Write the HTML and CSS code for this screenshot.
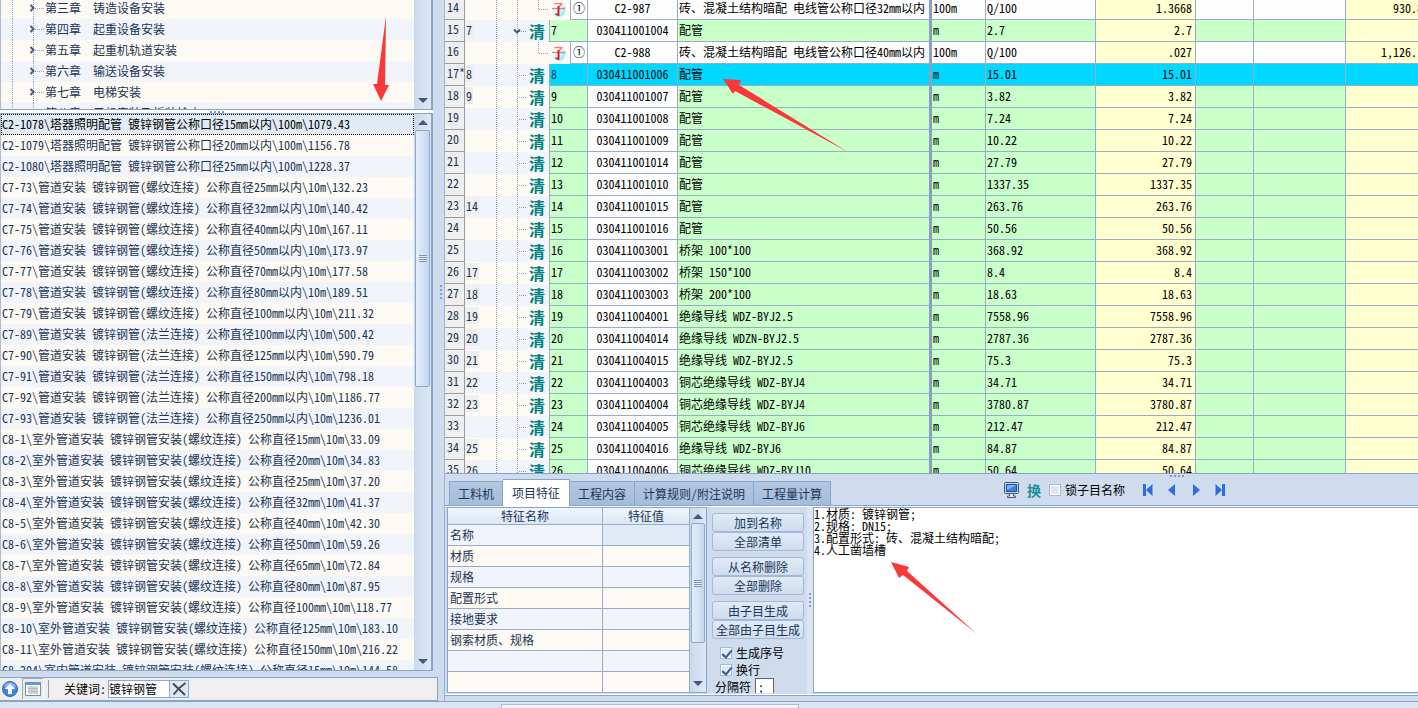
FILE: index.html
```html
<!DOCTYPE html>
<html lang="zh-CN">
<head>
<meta charset="utf-8">
<title>工程量清单</title>
<link rel="stylesheet" href="styles.css">
</head>
<body>
<svg class="defs" aria-hidden="true">
  <symbol id="chap" viewBox="0 0 44 21"><path class="dots" d="M11.5 0V21M32.5 0V21M34 10.5H43"/><path class="chev" d="M29.5 7L32.5 10L29.5 13"/></symbol>
  <symbol id="leaf" viewBox="0 0 33 22"><path class="dots" d="M.5 0V22M21.5 0V22M23 11.5H31"/></symbol>
  <symbol id="open" viewBox="0 0 33 22"><path class="dots" d="M.5 0V22M21.5 0V22M23 11.5H31"/><path class="chev" d="M18 9.5L21 12.5L24 9.5"/></symbol>
  <symbol id="child" viewBox="0 0 54 22"><path class="dots" d="M.5 0V22M21.5 0V22M42.5 0V11.5M43 11.5H53"/></symbol>
  <symbol id="up" viewBox="0 0 10 5"><path d="M5 0L10 5H0Z"/></symbol>
  <symbol id="down" viewBox="0 0 10 5"><path d="M5 5L10 0H0Z"/></symbol>
  <symbol id="zi" viewBox="0 0 15 15"><path d="M1.500 1.500H11.500M11 2L8 4.500M1 6.500H14" fill="none" stroke="#f4797a" stroke-width="1.600"/><path d="M7.500 4V13L4.500 12" fill="none" stroke="#dc1418" stroke-width="1.800"/></symbol>
</svg>

<main class="main">
  <section class="left">
    <div class="pane tree">
      <ul class="rows">
        <li><svg class="chap"><use href="#chap"/></svg>第三章　铸造设备安装</li>
        <li><svg class="chap"><use href="#chap"/></svg>第四章　起重设备安装</li>
        <li><svg class="chap"><use href="#chap"/></svg>第五章　起重机轨道安装</li>
        <li><svg class="chap"><use href="#chap"/></svg>第六章　输送设备安装</li>
        <li><svg class="chap"><use href="#chap"/></svg>第七章　电梯安装</li>
        <li><svg class="chap"><use href="#chap"/></svg>第八章　风机安装及拆装检查</li>
      </ul>
      <div class="bar"><span></span><svg class="arr"><use href="#down"/></svg></div>
    </div>
    <div class="hsplit"><i class="grip"></i></div>
    <div class="pane list">
      <ul class="rows">
        <li class="picked">C2-1078\塔器照明配管 镀锌钢管公称口径15mm以内\100m\1079.43</li>
        <li>C2-1079\塔器照明配管 镀锌钢管公称口径20mm以内\100m\1156.78</li>
        <li>C2-1080\塔器照明配管 镀锌钢管公称口径25mm以内\100m\1228.37</li>
        <li>C7-73\管道安装 镀锌钢管(螺纹连接) 公称直径25mm以内\10m\132.23</li>
        <li>C7-74\管道安装 镀锌钢管(螺纹连接) 公称直径32mm以内\10m\140.42</li>
        <li>C7-75\管道安装 镀锌钢管(螺纹连接) 公称直径40mm以内\10m\167.11</li>
        <li>C7-76\管道安装 镀锌钢管(螺纹连接) 公称直径50mm以内\10m\173.97</li>
        <li>C7-77\管道安装 镀锌钢管(螺纹连接) 公称直径70mm以内\10m\177.58</li>
        <li>C7-78\管道安装 镀锌钢管(螺纹连接) 公称直径80mm以内\10m\189.51</li>
        <li>C7-79\管道安装 镀锌钢管(螺纹连接) 公称直径100mm以内\10m\211.32</li>
        <li>C7-89\管道安装 镀锌钢管(法兰连接) 公称直径100mm以内\10m\500.42</li>
        <li>C7-90\管道安装 镀锌钢管(法兰连接) 公称直径125mm以内\10m\590.79</li>
        <li>C7-91\管道安装 镀锌钢管(法兰连接) 公称直径150mm以内\10m\798.18</li>
        <li>C7-92\管道安装 镀锌钢管(法兰连接) 公称直径200mm以内\10m\1186.77</li>
        <li>C7-93\管道安装 镀锌钢管(法兰连接) 公称直径250mm以内\10m\1236.01</li>
        <li>C8-1\室外管道安装 镀锌钢管安装(螺纹连接) 公称直径15mm\10m\33.09</li>
        <li>C8-2\室外管道安装 镀锌钢管安装(螺纹连接) 公称直径20mm\10m\34.83</li>
        <li>C8-3\室外管道安装 镀锌钢管安装(螺纹连接) 公称直径25mm\10m\37.20</li>
        <li>C8-4\室外管道安装 镀锌钢管安装(螺纹连接) 公称直径32mm\10m\41.37</li>
        <li>C8-5\室外管道安装 镀锌钢管安装(螺纹连接) 公称直径40mm\10m\42.30</li>
        <li>C8-6\室外管道安装 镀锌钢管安装(螺纹连接) 公称直径50mm\10m\59.26</li>
        <li>C8-7\室外管道安装 镀锌钢管安装(螺纹连接) 公称直径65mm\10m\72.84</li>
        <li>C8-8\室外管道安装 镀锌钢管安装(螺纹连接) 公称直径80mm\10m\87.95</li>
        <li>C8-9\室外管道安装 镀锌钢管安装(螺纹连接) 公称直径100mm\10m\118.77</li>
        <li>C8-10\室外管道安装 镀锌钢管安装(螺纹连接) 公称直径125mm\10m\183.10</li>
        <li>C8-11\室外管道安装 镀锌钢管安装(螺纹连接) 公称直径150mm\10m\216.22</li>
        <li>C8-204\室内管道安装 镀锌钢管安装(螺纹连接) 公称直径15mm\10m\144.58</li>
      </ul>
      <div class="bar"><svg class="arr"><use href="#up"/></svg><div class="track"><div class="thumb"><i class="ridges"></i></div></div><svg class="arr"><use href="#down"/></svg></div>
    </div>
    <div class="finder">
      <button class="flat" aria-label="上移"><svg width="16" height="16" viewBox="0 0 16 16"><circle cx="8" cy="8" r="7.5" fill="#3f86ea" stroke="#3567b8"/><ellipse cx="8" cy="5" rx="5.5" ry="3.5" fill="#7fb5f7"/><path d="M8 2.5L13 8H10V13H6V8H3Z" fill="#fff"/></svg></button>
      <button class="flat pressed" aria-label="列表"><svg width="16" height="14" viewBox="0 0 16 14"><path d="M.5 .5H15.5V13.5H.5Z" fill="#fff" stroke="#5b97bd"/><path d="M1 1H15V3H1Z" fill="#56a0d6"/><path d="M3 4H13V12H3Z" fill="#d5d5cf"/><path d="M3 6.500H13M3 9.500H13" stroke="#b5b8ba"/></svg></button>
      <i class="sep"></i>
      <label for="kw">关键词:</label>
      <span class="combo"><input id="kw" type="text" value="镀锌钢管"><button class="clear" aria-label="清除"><svg width="15" height="14" viewBox="0 0 15 14"><path d="M1 1.5L13 13M13.5 1C9 4 5 8 1.5 12.5" fill="none" stroke="#47494d" stroke-width="2"/></svg></button></span>
    </div>
  </section>
  <div class="vsplit"><i class="grip upright"></i></div>

  <section class="right">
    <div class="sheet">
      <table class="bill">
        <colgroup><col class="w20"><col class="w85"><col class="w21"><col class="w17"><col class="w90"><col class="w254"><col class="w54"><col class="w110"><col class="w100"><col class="w58"><col class="w92"><col></colgroup>
        <tbody>
        <tr class="sub"><th>14</th><td class="node" colspan="2"><div><span class="ord"></span><svg class="kid"><use href="#child"/></svg><svg class="zi"><use href="#zi"/></svg></div></td><td>①</td><td>C2-987</td><td>砖、混凝土结构暗配 电线管公称口径32mm以内</td><td>100m</td><td>Q/100</td><td>1.3668</td><td></td><td></td><td>930.8&nbsp;</td></tr>
        <tr><th>15</th><td class="node"><div><span class="ord"><em>7</em></span><svg class="twig"><use href="#open"/></svg><b>清</b></div></td><td colspan="2">7</td><td>030411001004</td><td>配管</td><td>m</td><td>2.7</td><td>2.7</td><td></td><td></td><td></td></tr>
        <tr class="sub"><th>16</th><td class="node" colspan="2"><div><span class="ord"></span><svg class="kid"><use href="#child"/></svg><svg class="zi"><use href="#zi"/></svg></div></td><td>①</td><td>C2-988</td><td>砖、混凝土结构暗配 电线管公称口径40mm以内</td><td>100m</td><td>Q/100</td><td>.027</td><td></td><td></td><td>1,126.&nbsp;&nbsp;</td></tr>
        <tr class="sel"><th>17*</th><td class="node"><div><span class="ord"><em>8</em></span><svg class="twig"><use href="#leaf"/></svg><b>清</b></div></td><td colspan="2">8</td><td>030411001006</td><td>配管</td><td>m</td><td>15.01</td><td>15.01</td><td></td><td></td><td></td></tr>
        <tr><th>18</th><td class="node"><div><span class="ord"><em>9</em></span><svg class="twig"><use href="#leaf"/></svg><b>清</b></div></td><td colspan="2">9</td><td>030411001007</td><td>配管</td><td>m</td><td>3.82</td><td>3.82</td><td></td><td></td><td></td></tr>
        <tr><th>19</th><td class="node"><div><span class="ord"></span><svg class="twig"><use href="#leaf"/></svg><b>清</b></div></td><td colspan="2">10</td><td>030411001008</td><td>配管</td><td>m</td><td>7.24</td><td>7.24</td><td></td><td></td><td></td></tr>
        <tr><th>20</th><td class="node"><div><span class="ord"></span><svg class="twig"><use href="#leaf"/></svg><b>清</b></div></td><td colspan="2">11</td><td>030411001009</td><td>配管</td><td>m</td><td>10.22</td><td>10.22</td><td></td><td></td><td></td></tr>
        <tr><th>21</th><td class="node"><div><span class="ord"></span><svg class="twig"><use href="#leaf"/></svg><b>清</b></div></td><td colspan="2">12</td><td>030411001014</td><td>配管</td><td>m</td><td>27.79</td><td>27.79</td><td></td><td></td><td></td></tr>
        <tr><th>22</th><td class="node"><div><span class="ord"></span><svg class="twig"><use href="#leaf"/></svg><b>清</b></div></td><td colspan="2">13</td><td>030411001010</td><td>配管</td><td>m</td><td>1337.35</td><td>1337.35</td><td></td><td></td><td></td></tr>
        <tr><th>23</th><td class="node"><div><span class="ord"><em>14</em></span><svg class="twig"><use href="#leaf"/></svg><b>清</b></div></td><td colspan="2">14</td><td>030411001015</td><td>配管</td><td>m</td><td>263.76</td><td>263.76</td><td></td><td></td><td></td></tr>
        <tr><th>24</th><td class="node"><div><span class="ord"></span><svg class="twig"><use href="#leaf"/></svg><b>清</b></div></td><td colspan="2">15</td><td>030411001016</td><td>配管</td><td>m</td><td>50.56</td><td>50.56</td><td></td><td></td><td></td></tr>
        <tr><th>25</th><td class="node"><div><span class="ord"></span><svg class="twig"><use href="#leaf"/></svg><b>清</b></div></td><td colspan="2">16</td><td>030411003001</td><td>桥架 100*100</td><td>m</td><td>368.92</td><td>368.92</td><td></td><td></td><td></td></tr>
        <tr><th>26</th><td class="node"><div><span class="ord"><em>17</em></span><svg class="twig"><use href="#leaf"/></svg><b>清</b></div></td><td colspan="2">17</td><td>030411003002</td><td>桥架 150*100</td><td>m</td><td>8.4</td><td>8.4</td><td></td><td></td><td></td></tr>
        <tr><th>27</th><td class="node"><div><span class="ord"><em>18</em></span><svg class="twig"><use href="#leaf"/></svg><b>清</b></div></td><td colspan="2">18</td><td>030411003003</td><td>桥架 200*100</td><td>m</td><td>18.63</td><td>18.63</td><td></td><td></td><td></td></tr>
        <tr><th>28</th><td class="node"><div><span class="ord"><em>19</em></span><svg class="twig"><use href="#leaf"/></svg><b>清</b></div></td><td colspan="2">19</td><td>030411004001</td><td>绝缘导线 WDZ-BYJ2.5</td><td>m</td><td>7558.96</td><td>7558.96</td><td></td><td></td><td></td></tr>
        <tr><th>29</th><td class="node"><div><span class="ord"><em>20</em></span><svg class="twig"><use href="#leaf"/></svg><b>清</b></div></td><td colspan="2">20</td><td>030411004014</td><td>绝缘导线 WDZN-BYJ2.5</td><td>m</td><td>2787.36</td><td>2787.36</td><td></td><td></td><td></td></tr>
        <tr><th>30</th><td class="node"><div><span class="ord"><em>21</em></span><svg class="twig"><use href="#leaf"/></svg><b>清</b></div></td><td colspan="2">21</td><td>030411004015</td><td>绝缘导线 WDZ-BYJ2.5</td><td>m</td><td>75.3</td><td>75.3</td><td></td><td></td><td></td></tr>
        <tr><th>31</th><td class="node"><div><span class="ord"><em>22</em></span><svg class="twig"><use href="#leaf"/></svg><b>清</b></div></td><td colspan="2">22</td><td>030411004003</td><td>铜芯绝缘导线 WDZ-BYJ4</td><td>m</td><td>34.71</td><td>34.71</td><td></td><td></td><td></td></tr>
        <tr><th>32</th><td class="node"><div><span class="ord"><em>23</em></span><svg class="twig"><use href="#leaf"/></svg><b>清</b></div></td><td colspan="2">23</td><td>030411004004</td><td>铜芯绝缘导线 WDZ-BYJ4</td><td>m</td><td>3780.87</td><td>3780.87</td><td></td><td></td><td></td></tr>
        <tr><th>33</th><td class="node"><div><span class="ord"></span><svg class="twig"><use href="#leaf"/></svg><b>清</b></div></td><td colspan="2">24</td><td>030411004005</td><td>铜芯绝缘导线 WDZ-BYJ6</td><td>m</td><td>212.47</td><td>212.47</td><td></td><td></td><td></td></tr>
        <tr><th>34</th><td class="node"><div><span class="ord"><em>25</em></span><svg class="twig"><use href="#leaf"/></svg><b>清</b></div></td><td colspan="2">25</td><td>030411004016</td><td>绝缘导线 WDZ-BYJ6</td><td>m</td><td>84.87</td><td>84.87</td><td></td><td></td><td></td></tr>
        <tr><th>35</th><td class="node"><div><span class="ord"><em>26</em></span><svg class="twig"><use href="#leaf"/></svg><b>清</b></div></td><td colspan="2">26</td><td>030411004006</td><td>铜芯绝缘导线 WDZ-BYJ10</td><td>m</td><td>50.64</td><td>50.64</td><td></td><td></td><td></td></tr>
        </tbody>
      </table>
    </div>

    <div class="dock">
      <div class="grip-line"><i class="grip"></i></div>
      <div class="strip">
        <nav class="tabs" role="tablist">
          <button role="tab">工料机</button><button role="tab" class="on" aria-selected="true">项目特征</button><button role="tab">工程内容</button><button role="tab">计算规则/附注说明</button><button role="tab">工程量计算</button>
        </nav>
        <div class="tools">
          <button class="flat" aria-label="显示"><svg width="15" height="16" viewBox="0 0 15 16"><rect x=".5" y=".5" width="14" height="11" rx="1" fill="#c9d6e4" stroke="#3f5878"/><rect x="2.5" y="2.5" width="10" height="7" fill="#3d83e0" stroke="#1c4c9c"/><path d="M3 3H12L3 8Z" fill="#7db4f6"/><path d="M5.500 12V14H3.500V15.500H11.500V14H9.500V12" fill="#dfe6ee" stroke="#4a5d78"/></svg></button>
          <button class="flat swap">换</button>
          <label class="tick"><input type="checkbox">锁子目名称</label>
          <div class="pager">
            <button class="flat" aria-label="首条"><svg width="10" height="12" viewBox="0 0 10 12"><path d="M0 0H3V12H0ZM9.500 0V12L3 6Z" fill="#2d6fe0"/></svg></button>
            <button class="flat" aria-label="上一条"><svg width="10" height="12" viewBox="0 0 10 12"><path d="M8 0V12L1 6Z" fill="#2d6fe0"/></svg></button>
            <button class="flat" aria-label="下一条"><svg width="10" height="12" viewBox="0 0 10 12"><path d="M2 0V12L9 6Z" fill="#2d6fe0"/></svg></button>
            <button class="flat" aria-label="末条"><svg width="10" height="12" viewBox="0 0 10 12"><path d="M10 0H7V12H10ZM.5 0V12L7 6Z" fill="#2d6fe0"/></svg></button>
          </div>
        </div>
      </div>
      <div class="panel">
        <table class="traits">
          <thead><tr><th>特征名称</th><th>特征值</th></tr></thead>
          <tbody>
            <tr><td>名称</td><td class="cur"></td></tr>
            <tr><td>材质</td><td></td></tr>
            <tr><td>规格</td><td></td></tr>
            <tr><td>配置形式</td><td></td></tr>
            <tr><td>接地要求</td><td></td></tr>
            <tr><td>钢索材质、规格</td><td></td></tr>
            <tr><td></td><td></td></tr>
            <tr><td></td><td></td></tr>
          </tbody>
        </table>
        <div class="bar framed"><svg class="arr"><use href="#up"/></svg><div class="track"><div class="thumb mid"><i class="ridges"></i></div></div><svg class="arr"><use href="#down"/></svg></div>
        <div class="acts">
          <div class="pair"><button>加到名称</button><button>全部清单</button></div>
          <div class="pair"><button>从名称删除</button><button>全部删除</button></div>
          <div class="pair"><button>由子目生成</button><button>全部由子目生成</button></div>
          <div class="opts">
            <label class="tick"><input type="checkbox" checked>生成序号</label>
            <label class="tick"><input type="checkbox" checked>换行</label>
          </div>
          <label class="delim">分隔符<input type="text" value=";"></label>
        </div>
        <div class="nsplit"><i class="grip upright"></i></div>
        <textarea class="note" aria-label="特征描述" spellcheck="false">1.材质: 镀锌钢管;
2.规格: DN15;
3.配置形式: 砖、混凝土结构暗配;
4.人工凿墙槽</textarea>
      </div>
    </div>
  </section>
</main>
<footer class="status"><div class="well"></div></footer>

<svg class="marks" aria-hidden="true">
  <path d="M386 16L385 85L389 85L381 101L373 84L377 84Z"/>
  <path d="M723 79L741 80L739 85L848 152L735 91L733 94Z"/>
  <path d="M891 562L909 567L907 571L977 634L903 575L899 578Z"/>
</svg>
</body>
</html>
```

FILE: styles.css
```css
* { box-sizing: border-box; }

body {
  margin: 0;
  height: 100vh;
  display: flex;
  flex-direction: column;
  overflow: hidden;
  position: relative;
  background: #cfdcee;
  color: #1b3556;
  font: 12px/16px "Noto Sans Mono CJK SC", "Noto Sans CJK SC", monospace;
}

button, input, textarea { font: inherit; color: inherit; margin: 0; }
ul { list-style: none; margin: 0; padding: 0; }
svg { display: block; flex: none; }

.defs { position: absolute; width: 0; height: 0; }
.dots { fill: none; stroke: #8aa2c4; stroke-dasharray: 1 1; shape-rendering: crispEdges; }
.chev { fill: none; stroke: #4d5b80; stroke-width: 2; }

.marks { position: absolute; inset: 0; width: 100%; height: 100%; pointer-events: none; fill: #fb3838; }

.main { flex: 1; min-height: 0; display: flex; }

/* left column */
.left { width: 438px; flex: none; display: flex; flex-direction: column; }
.pane {
  display: flex;
  overflow: hidden;
  margin-right: 5px;
  border: 1px solid #8ba3c7;
  border-left-color: #a9bbd6;
  border-right: 2px solid #8ba3c7;
  background: #fff;
}
.tree { height: 110px; border-top: 0; flex: none; }
.list { flex: 1; min-height: 0; margin-bottom: 6px; }
.rows { flex: 1; min-width: 0; }
.rows li {
  height: 21px;
  line-height: 19px;
  display: flex;
  white-space: pre;
  overflow: hidden;
  background: #f1f4fa;
}
.tree .rows { margin-top: -2px; }
.tree .rows li:nth-child(odd), .list .rows li:nth-child(even) { background: #fcfaf2; }
.list .rows li { padding-left: 1px; }
.list .rows .picked { background: #e1eaf5; color: #000; outline: 1px dotted #000; outline-offset: -1px; }
.chap { width: 44px; height: 21px; }

.bar {
  width: 17px;
  flex: none;
  display: flex;
  flex-direction: column;
  justify-content: space-between;
  align-items: center;
  padding: 6px 0;
  background: linear-gradient(90deg, #cbd9ec, #dde8f5);
}
.arr { width: 10px; height: 5px; fill: #46557f; }
.track { flex: 1; align-self: stretch; padding: 5px 1px; }
.thumb {
  height: 49%;
  display: flex;
  align-items: center;
  justify-content: center;
  border: 1px solid #8ba9d3;
  border-radius: 2px;
  background: linear-gradient(90deg, #e4eef9, #c5d7ec);
}
.thumb.mid { height: 78%; }
.ridges { width: 8px; height: 7px; background: repeating-linear-gradient(#7b93b8 0 1px, #e4eef9 1px 2px); }

.hsplit { height: 3px; flex: none; display: flex; justify-content: center; align-items: center; margin-right: 5px; background: #fff; }
.grip { width: 14px; height: 2px; background: repeating-linear-gradient(90deg, #7f9cc6 0 2px, transparent 2px 4px); }
.grip.upright { width: 2px; height: 14px; background: repeating-linear-gradient(#7f9cc6 0 2px, transparent 2px 4px); }
.vsplit { width: 7px; }
.nsplit { width: 6px; background: #dbe6f3; }
.vsplit, .nsplit { flex: none; display: flex; align-items: center; justify-content: center; }
.vsplit { padding-bottom: 118px; border-right: 1px solid #9db1d0; }

.flat { border: 0; padding: 0; background: none; display: flex; align-items: center; justify-content: center; }

.finder {
  height: 24px;
  flex: none;
  display: flex;
  align-items: center;
  padding-left: 2px;
  border: 1px solid #8ba3c7;
  border-left: 0;
  background: #efefef;
  color: #000;
}
.pressed { width: 22px; height: 22px; margin-left: 4px; border: 1px solid #a9a9a9; border-right-color: #fff; border-bottom-color: #fff; background: #e9e9e9; }
.sep { width: 1px; height: 18px; margin: 0 15px 0 4px; background: #9b9b9b; }
.combo { display: flex; height: 18px; margin-left: 2px; border: 1px solid #8ba9d3; background: #fff; }
.combo input { width: 60px; border: 0; padding: 0; background: #fff; }
.clear { width: 19px; padding: 0; border: 0; border-left: 1px solid #8ba9d3; background: #dde8f5; display: flex; align-items: center; justify-content: center; }

/* bill sheet */
.right { flex: 1; min-width: 0; display: flex; flex-direction: column; }
.sheet { flex: 1; min-height: 0; overflow: hidden; background: #fff; }
.bill { width: calc(100% + 14px); margin-top: -2px; table-layout: fixed; border-collapse: separate; border-spacing: 0; color: #000; }
.w20 { width: 20px; } .w85 { width: 85px; } .w21 { width: 21px; } .w17 { width: 17px; } .w90 { width: 90px; } .w254 { width: 254px; }
.w54 { width: 54px; } .w110 { width: 110px; } .w100 { width: 100px; } .w58 { width: 58px; } .w92 { width: 92px; }
.bill th, .bill td {
  height: 22px;
  padding: 0 1px 2px;
  line-height: 19px;
  font-weight: 400;
  text-align: left;
  white-space: nowrap;
  border-right: 1px solid #9aabc8;
  border-bottom: 1px solid #9aabc8;
  background: #c9ffc9;
}
.bill th { padding: 0 2px 3px; line-height: 18px; color: #1b3556; background: #efefef; border-color: #9b9b9b; }
.bill td:nth-child(4) { text-align: center; background: #fdfdfd; }
.bill td:nth-child(5) { border-right: 3px solid #88a0c4; }
.bill td:nth-child(8) { text-align: right; padding-right: 3px; }
.bill td:last-child { text-align: right; padding-right: 2px; }
.bill tr.sub td { background: #fdfdfd; }
.bill .sub td:nth-child(3) { text-align: center; padding: 0 0 2px; }
.bill .sub td:nth-child(4) { text-align: center; }
.bill tr td:nth-child(8), .bill tr td:last-child { background: #ffffcf; }
.bill tr.sel td { background: #00d8ff; }
.bill tr.sel td:nth-child(3) { color: #1b3556; }

.bill tr td.node { padding: 0; border-bottom: 0; background: #f1f4fa; }
.bill tr.sub td.node, .bill tr:nth-child(odd) td.node { background: #fcfaf2; }
.node div { height: 22px; display: flex; align-items: center; }
.ord { width: 31px; flex: none; color: #1b3556; line-height: 16px; padding-bottom: 2px; }
.ord em { font-style: normal; background: #efefef; padding: 0 1px; }
.twig { width: 33px; height: 22px; }
.kid { width: 54px; height: 22px; }
.node b { font-size: 16px; color: #008080; line-height: 22px; }
.zi { width: 15px; height: 15px; border-radius: 50%; background: linear-gradient(135deg, #fff 30%, #6feef5); margin-left: 1px; }

/* lower dock */
.dock { flex: none; border-top: 1px solid #8ba3c7; margin-bottom: 5px; }
.grip-line { height: 5px; display: flex; justify-content: center; padding: 1px 0 2px 490px; }
.strip { display: flex; align-items: flex-end; justify-content: space-between; border-bottom: 1px solid #8ba3c7; }
.tabs { display: flex; align-items: flex-end; padding-left: 4px; }
.tabs button {
  height: 24px;
  padding: 0 8px;
  border: 1px solid #8ba3c7;
  border-width: 1px 1px 0;
  background: linear-gradient(#b3c8e1, #a3bcd9);
}
.tabs button + button { border-left-width: 0; }
.tabs .on { height: 27px; padding: 0 9px; margin-bottom: -1px; background: #fff; }
.tools { flex: 1; display: flex; align-items: center; height: 26px; padding: 0 0 4px 173px; color: #000; }
.swap { margin: 0 8px; font-size: 14px; color: #1b8f95; font-weight: 700; }
.tick { display: flex; align-items: center; gap: 4px; color: #000; }
.tick input {
  appearance: none;
  width: 12px;
  height: 12px;
  border: 1px solid #a3bbdb;
  outline: 1px solid #fff;
  outline-offset: -2px;
  background: #e4e6ea;
}
.tick input:checked { background: #dfe8f3; position: relative; }
.tick input:checked::after { content: ""; position: absolute; left: 3px; top: 0; width: 4px; height: 8px; border: solid #345a94; border-width: 0 2px 2px 0; transform: rotate(40deg); }
.pager { display: flex; gap: 14px; margin-left: 18px; }

.panel { display: flex; padding: 1px 0 2px 2px; border-bottom: 1px solid #8ba3c7; box-shadow: inset 0 1px #fff, inset 0 -1px #fff; }
.traits { width: 243px; flex: none; table-layout: fixed; border-collapse: separate; border-spacing: 0; border: solid #8ba3c7; border-width: 1px 0 0 1px; }
.traits th, .traits td { padding: 0 2px; border-right: 1px solid #9aabc8; border-bottom: 1px solid #9aabc8; }
.traits th { width: 155px; height: 17px; line-height: 16px; font-weight: 400; background: linear-gradient(#f0f6fd, #dbe7f6); }
.traits th + th { width: 87px; }
.traits td { height: 21px; line-height: 20px; background: #f1f4fa; }
.traits tr:nth-child(even) td { background: #fcfaf2; }
.traits .cur { background: #e1eaf5; }
.framed { border: solid #8ba3c7; border-width: 1px 1px 1px 0; }
.framed .track { padding: 4px 1px; }

.acts { width: 100px; height: 186px; overflow: hidden; flex: none; padding: 6px 3px 0 5px; display: flex; flex-direction: column; }
.pair { display: flex; flex-direction: column; margin-bottom: 6px; }
.pair button { height: 19px; padding: 0; line-height: 17px; border: 1px solid #a5b9d7; border-radius: 3px; background: linear-gradient(#e1ebf7, #cddcee); white-space: nowrap; }
.opts { display: flex; flex-direction: column; gap: 1px; padding-left: 8px; }
.delim { display: flex; align-items: center; gap: 4px; padding-left: 3px; color: #000; }
.delim input { width: 19px; height: 17px; padding: 0 2px; border: 1px solid #666; background: #fff; }

.note {
  flex: 1;
  min-width: 0;
  padding: 0;
  border: 1px solid #8ba3c7;
  border-right: 0;
  border-radius: 0;
  resize: none;
  outline: 0;
  line-height: 12px;
  color: #000;
  background: #fff;
}

.status { height: 7px; flex: none; display: flex; padding-top: 2px; border-top: 1px solid #8ba3c7; background: #dbe6f4; }
.well { width: 298px; margin-left: 501px; border: 1px solid #a9bbd6; border-bottom: 0; background: #f1f4fa; }
```
